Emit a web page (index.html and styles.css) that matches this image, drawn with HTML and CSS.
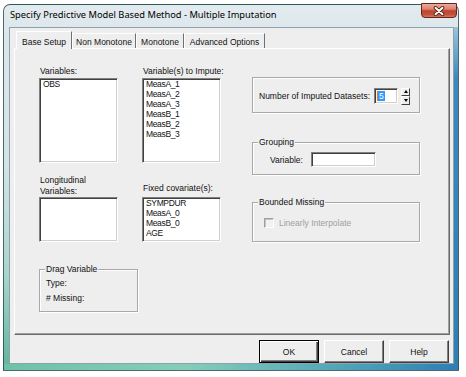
FILE: index.html
```html
<!DOCTYPE html>
<html>
<head>
<meta charset="utf-8">
<link rel="stylesheet" href="styles.css">
</head>
<body>
<div class="window">
  <div class="titlebar">
    <span class="title">Specify Predictive Model Based Method - Multiple Imputation</span>
    <div class="close">
      <svg width="14" height="10" viewBox="0 0 14 10">
        <path d="M3.5 1.8 L10.5 8.2 M10.5 1.8 L3.5 8.2" stroke="#4a1a12" stroke-width="3.6" stroke-linecap="round" fill="none"/>
        <path d="M3.5 1.8 L10.5 8.2 M10.5 1.8 L3.5 8.2" stroke="#ffffff" stroke-width="2" stroke-linecap="round" fill="none"/>
      </svg>
    </div>
  </div>
  <div class="frame-body">
    <div class="client">
      <div class="tabs">
        <div class="tab active w1">Base Setup</div>
        <div class="tab w2">Non Monotone</div>
        <div class="tab w3">Monotone</div>
        <div class="tab w4">Advanced Options</div>
      </div>
      <div class="panel">
        <div class="left">
          <div class="fields">
            <div class="field">
              <div class="lbl">Variables:</div>
              <ul class="list tall"><li>OBS</li></ul>
            </div>
            <div class="field">
              <div class="lbl">Variable(s) to Impute:</div>
              <ul class="list tall">
                <li>MeasA_1</li><li>MeasA_2</li><li>MeasA_3</li>
                <li>MeasB_1</li><li>MeasB_2</li><li>MeasB_3</li>
              </ul>
            </div>
            <div class="field">
              <div class="lbl two">Longitudinal<br>Variables:</div>
              <ul class="list short"></ul>
            </div>
            <div class="field">
              <div class="lbl fixed">Fixed covariate(s):</div>
              <ul class="list short">
                <li>SYMPDUR</li><li>MeasA_0</li><li>MeasB_0</li><li>AGE</li>
              </ul>
            </div>
          </div>
          <div class="group drag">
            <div class="gtitle">Drag Variable</div>
            <div class="gline first">Type:</div>
            <div class="gline second"># Missing:</div>
          </div>
        </div>
        <div class="right">
          <div class="group g-num">
            <span>Number of Imputed Datasets:</span>
            <div class="input num"><span class="sel">5</span></div>
            <div class="spin">
              <div class="sb"><span class="tri up"></span></div>
              <div class="sb"><span class="tri down"></span></div>
            </div>
          </div>
          <div class="group g-grp">
            <div class="gtitle">Grouping</div>
            <div class="row var-row">
              <span>Variable:</span>
              <div class="input var"></div>
            </div>
          </div>
          <div class="group g-bnd">
            <div class="gtitle">Bounded Missing</div>
            <div class="row chk-row">
              <span class="check"></span>
              <span class="dis">Linearly Interpolate</span>
            </div>
          </div>
        </div>
      </div>
      <div class="buttons">
        <div class="btn default">OK</div>
        <div class="btn">Cancel</div>
        <div class="btn">Help</div>
      </div>
    </div>
  </div>
</div>
</body>
</html>
```
FILE: styles.css
```css
html, body {
  margin: 0;
  padding: 0;
  background: #ffffff;
}
body {
  font-family: "Liberation Sans", Arial, sans-serif;
  font-size: 8.5px;
  color: #111;
}
.window {
  margin: 4px 0 0 3px;
  width: 456px;
  height: 367px;
  box-sizing: border-box;
  border: 1px solid rgba(30, 62, 78, 0.75);
  border-radius: 7px 7px 0 0;
  background: linear-gradient(180deg, #e3ebef 0px, #dbe6eb 30px, #d4e3e7 160px, #a9d5ca 270px, #5fb49c 100%);
  display: flex;
  flex-direction: column;
}
.titlebar {
  height: 22px;
  flex: none;
  display: flex;
  align-items: flex-start;
  justify-content: space-between;
  padding-left: 6px;
}
.title {
  font-family: "Noto Sans", "Liberation Sans", sans-serif;
  font-size: 9.3px;
  line-height: 12px;
  margin-top: 4px;
  color: #000;
  white-space: nowrap;
}
.close {
  width: 36px;
  height: 15px;
  margin-top: -2px;
  margin-right: 1px;
  box-sizing: border-box;
  border: 1px solid #6a2418;
  border-radius: 0 0 4px 4px;
  background: linear-gradient(180deg, #e9aa9a 0%, #d98270 40%, #bf4630 52%, #c4503a 80%, #d27a60 100%);
  display: flex;
  align-items: center;
  justify-content: center;
}
.frame-body {
  flex: 1;
  display: flex;
  padding: 0 4px 6px 5px;
  background:
    linear-gradient(90deg, #6cc2a6 0%, #86cdb8 40%, #4aa0b8 78%, #2d7fb3 100%) bottom / 100% 6px no-repeat,
    linear-gradient(180deg, #9cc3da 0%, #3b89bc 15%, #2f7fb3 100%) right / 4px 100% no-repeat;
}
.client {
  flex: 1;
  display: flex;
  flex-direction: column;
  border: 1px solid #8ea2ad;
  background: #eeeeee;
  padding: 3px 3px 0 4px;
}
.tabs {
  height: 17px;
  flex: none;
  display: flex;
  align-items: flex-end;
  padding-left: 2px;
}
.tab {
  box-sizing: border-box;
  height: 15px;
  padding-top: 3px;
  line-height: 10px;
  text-align: center;
  white-space: nowrap;
  border-top: 1px solid #ffffff;
  border-left: 1px solid #ffffff;
  border-right: 1px solid #707070;
  background: #eeeeee;
}
.tab.active {
  height: 18px;
  padding-top: 5px;
  margin-bottom: -1px;
  position: relative;
  z-index: 1;
}
.w1 { width: 56px; }
.w2 { width: 64px; }
.w3 { width: 48px; }
.w4 { width: 81px; }
.panel {
  flex: 1;
  display: flex;
  align-items: flex-start;
  box-sizing: border-box;
  border-top: 1px solid #ffffff;
  border-left: 1px solid #ffffff;
  border-right: 1px solid #696969;
  border-bottom: 1px solid #696969;
  box-shadow: inset -1px -1px 0 #a0a0a0;
}
.left {
  padding: 17px 0 0 24px;
}
.fields {
  display: grid;
  grid-template-columns: 79px 79px;
  column-gap: 24px;
  row-gap: 12px;
  align-items: end;
}
.field {
  display: flex;
  flex-direction: column;
}
.lbl {
  padding-left: 1px;
  line-height: 10px;
  margin-bottom: 2px;
  white-space: nowrap;
}
.lbl.two {
  line-height: 11px;
  margin-bottom: 0;
}
.lbl.fixed {
  margin-bottom: 4px;
}
.list {
  list-style: none;
  margin: 0;
  padding: 0 0 0 3px;
  box-sizing: border-box;
  background: #ffffff;
  border: 1px solid;
  border-color: #808080 #ffffff #ffffff #808080;
  box-shadow: inset 1px 1px 0 #404040, inset -1px -1px 0 #d4d0c8;
  line-height: 10px;
  letter-spacing: -0.35px;
  overflow: hidden;
}
.list li {
  white-space: nowrap;
}
.list.tall { height: 85px; }
.list.short { height: 45px; }
.group {
  box-sizing: border-box;
  border: 1px solid #a9a9a9;
  box-shadow: 1px 1px 0 #ffffff, inset 1px 1px 0 #ffffff;
}
.gtitle {
  display: block;
  width: fit-content;
  margin: -6px 0 0 5px;
  padding: 0 1px;
  line-height: 10px;
  background: #eeeeee;
  white-space: nowrap;
}
.drag {
  margin-top: 27px;
  width: 99px;
  height: 43px;
}
.gline {
  padding-left: 6px;
  line-height: 10px;
}
.gline.first { margin-top: 4px; }
.gline.second { margin-top: 5px; }
.right {
  margin-left: 31px;
  padding-top: 28px;
  width: 168px;
  display: flex;
  flex-direction: column;
}
.g-num {
  height: 36px;
  display: flex;
  align-items: center;
  padding: 2px 9px 0 6px;
  white-space: nowrap;
}
.input {
  box-sizing: border-box;
  background: #ffffff;
  border: 1px solid;
  border-color: #808080 #ffffff #ffffff #808080;
  box-shadow: inset 1px 1px 0 #404040, inset -1px -1px 0 #d4d0c8;
}
.num {
  width: 24px;
  height: 16px;
  margin-left: auto;
  padding: 2px 0 0 2px;
  line-height: 10px;
}
.sel {
  display: inline-block;
  background: #3399ff;
  color: #ffffff;
  padding: 0 1px;
  border-left: 1px solid #e07a30;
}
.spin {
  width: 9px;
  height: 17px;
  margin-left: 3px;
  display: flex;
  flex-direction: column;
}
.sb {
  flex: 1;
  box-sizing: border-box;
  border: 1px solid;
  border-color: #ffffff #404040 #404040 #ffffff;
  background: #eeeeee;
  display: flex;
  align-items: center;
  justify-content: center;
}
.tri {
  width: 0;
  height: 0;
  border-left: 2px solid transparent;
  border-right: 2px solid transparent;
}
.tri.up { border-bottom: 3px solid #000; }
.tri.down { border-top: 3px solid #000; }
.g-grp {
  margin-top: 29px;
  height: 33px;
}
.row {
  display: flex;
  align-items: center;
  white-space: nowrap;
}
.var-row {
  margin-top: 5px;
  padding-left: 17px;
}
.var {
  width: 65px;
  height: 15px;
  margin-left: 8px;
}
.g-bnd {
  margin-top: 27px;
  height: 40px;
}
.chk-row {
  margin-top: 11px;
  padding-left: 11px;
  gap: 5px;
  line-height: 10px;
}
.check {
  width: 10px;
  height: 10px;
  box-sizing: border-box;
  border: 1px solid;
  border-color: #a0a0a0 #ffffff #ffffff #a0a0a0;
  box-shadow: inset 1px 1px 0 #c4c4c4;
  background: #f2f2f2;
}
.dis {
  color: #a0a0a0;
}
.buttons {
  flex: none;
  display: flex;
  justify-content: flex-end;
  gap: 5px;
  margin-top: 5px;
  padding-right: 1px;
}
.btn {
  width: 60px;
  height: 23px;
  box-sizing: border-box;
  border: 1px solid;
  border-color: #ffffff #404040 #404040 #ffffff;
  box-shadow: inset -1px -1px 0 #808080;
  background: #eeeeee;
  display: flex;
  align-items: center;
  justify-content: center;
  line-height: 10px;
}
.btn.default {
  border: 1px solid #000000;
  box-shadow: inset 1px 1px 0 #ffffff, inset -1px -1px 0 #404040, inset -2px -2px 0 #808080;
}
```
